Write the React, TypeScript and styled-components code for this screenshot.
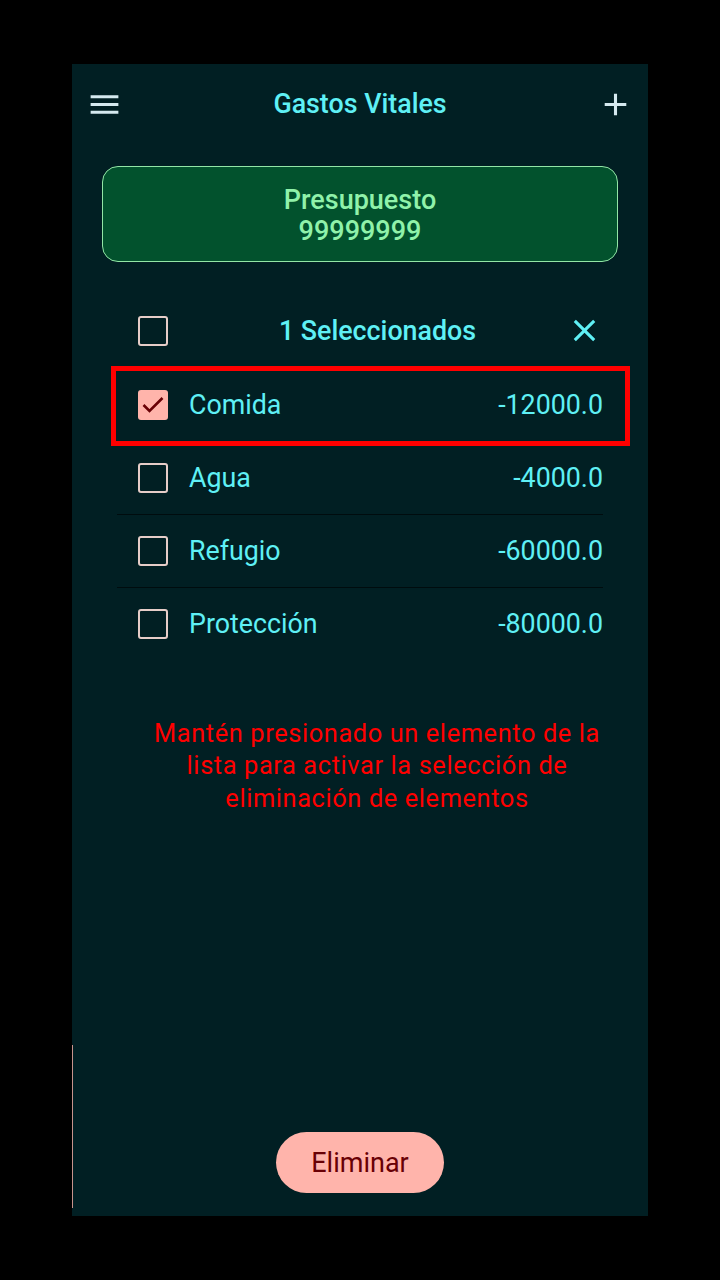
import React from "react";
import styled, { createGlobalStyle } from "styled-components";

const GlobalStyle = createGlobalStyle`
  html, body {
    margin: 0;
    padding: 0;
    background: #000000;
  }
  body {
    font-family: Roboto, "Noto Sans", sans-serif;
  }
`;

const Page = styled.div`
  width: 720px;
  height: 1280px;
  padding: 64px 72px;
  box-sizing: border-box;
  background: #000000;
`;

const Screen = styled.div`
  position: relative;
  width: 576px;
  height: 1152px;
  background: #011f23;
  display: flex;
  flex-direction: column;
`;

const EdgeLine = styled.div`
  position: absolute;
  left: 0;
  top: 981px;
  width: 1px;
  height: 163px;
  background: #c7938d;
`;

const TopBar = styled.div`
  height: 80px;
  display: grid;
  grid-template-columns: auto 1fr auto;
  align-items: center;
  padding: 0 14px;
`;

const IconButton = styled.div<{ $color?: string }>`
  width: 37px;
  height: 37px;
  display: flex;
  align-items: center;
  justify-content: center;
  color: ${(p) => p.$color ?? "#d5e9ef"};
  svg {
    width: 37px;
    height: 37px;
    fill: currentColor;
  }
`;

const Title = styled.div`
  text-align: center;
  font-size: 26.8px;
  font-weight: 500;
  color: #5ff0f5;
`;

const BudgetCard = styled.div`
  margin: 22px 30px 0;
  height: 96px;
  box-sizing: border-box;
  padding-top: 3px;
  border: 1.5px solid #92e6a6;
  border-radius: 16px;
  background: #02522d;
  display: flex;
  flex-direction: column;
  align-items: center;
  justify-content: center;
  color: #90f2aa;
  font-size: 27px;
  font-weight: 500;
  line-height: 31px;
`;

const List = styled.div`
  margin: 31px 45px 0;
  display: flex;
  flex-direction: column;
`;

const SelectHeader = styled.div`
  height: 75.5px;
  display: grid;
  grid-template-columns: auto 1fr auto;
  align-items: center;
  padding-left: 21px;
`;

const HeaderTitle = styled.div`
  text-align: center;
  padding-left: 21px;
  font-size: 26.8px;
  font-weight: 500;
  color: #5ff0f5;
`;

const Box = styled.div<{ $checked?: boolean }>`
  width: 30px;
  height: 30px;
  box-sizing: border-box;
  border-radius: 3px;
  border: ${(p) => (p.$checked ? "none" : "2.5px solid #e6cdc8")};
  background: ${(p) => (p.$checked ? "#ffb4ab" : "transparent")};
  display: flex;
  align-items: center;
  justify-content: center;
  flex-shrink: 0;
  svg {
    width: 30px;
    height: 30px;
  }
`;

const Row = styled.div`
  position: relative;
  height: 72px;
  display: flex;
  align-items: center;
  padding-left: 21px;
  & + & {
    border-top: 1.5px solid #000c0e;
  }
`;

const Label = styled.div`
  margin-left: 21px;
  font-size: 26.8px;
  color: #5ff0f5;
`;

const Amount = styled.div`
  margin-left: auto;
  font-size: 26.8px;
  color: #5ff0f5;
`;

const Highlight = styled.div`
  position: absolute;
  z-index: 2;
  top: -3px;
  left: -6px;
  right: -27px;
  bottom: -5px;
  border: 5px solid #ff0000;
  pointer-events: none;
`;

const Hint = styled.div`
  margin-top: 57px;
  padding: 0 30px 0 64px;
  text-align: center;
  font-family: Roboto, sans-serif;
  font-size: 25.4px;
  letter-spacing: 0.6px;
  line-height: 32.5px;
  color: #ff0000;
  white-space: nowrap;
`;

const DeleteButton = styled.div`
  margin: auto auto 23px;
  width: 168px;
  height: 61px;
  border-radius: 31px;
  background: #ffb4ab;
  color: #690005;
  font-size: 27px;
  display: flex;
  align-items: center;
  justify-content: center;
`;

const MenuIcon = () => (
  <svg viewBox="0 0 24 24">
    <path d="M3 18h18v-2H3v2zm0-5h18v-2H3v2zm0-7v2h18V6H3z" />
  </svg>
);

const AddIcon = () => (
  <svg viewBox="0 0 24 24">
    <path d="M19 13h-6v6h-2v-6H5v-2h6V5h2v6h6v2z" />
  </svg>
);

const CloseIcon = () => (
  <svg viewBox="0 0 24 24">
    <path d="M19 6.41L17.59 5 12 10.59 6.41 5 5 6.41 10.59 12 5 17.59 6.41 19 12 13.41 17.59 19 19 17.59 13.41 12z" />
  </svg>
);

const CheckMark = () => (
  <svg viewBox="0 0 30 30">
    <polyline
      points="5.5,15 11.5,21 24.5,8"
      fill="none"
      stroke="#690005"
      strokeWidth="2.6"
    />
  </svg>
);

const items = [
  { name: "Comida", amount: "-12000.0", checked: true },
  { name: "Agua", amount: "-4000.0", checked: false },
  { name: "Refugio", amount: "-60000.0", checked: false },
  { name: "Protección", amount: "-80000.0", checked: false },
];

export default function App() {
  return (
    <>
      <GlobalStyle />
      <Page>
        <Screen>
          <EdgeLine />
          <TopBar>
            <IconButton>
              <MenuIcon />
            </IconButton>
            <Title>Gastos Vitales</Title>
            <IconButton>
              <AddIcon />
            </IconButton>
          </TopBar>
          <BudgetCard>
            <div>Presupuesto</div>
            <div>99999999</div>
          </BudgetCard>
          <List>
            <SelectHeader>
              <Box />
              <HeaderTitle>1 Seleccionados</HeaderTitle>
              <IconButton $color="#5ff0f5">
                <CloseIcon />
              </IconButton>
            </SelectHeader>
            {items.map((it) => (
              <Row key={it.name}>
                <Box $checked={it.checked}>{it.checked && <CheckMark />}</Box>
                <Label>{it.name}</Label>
                <Amount>{it.amount}</Amount>
                {it.checked && <Highlight />}
              </Row>
            ))}
          </List>
          <Hint>
            Mantén presionado un elemento de la
            <br />
            lista para activar la selección de
            <br />
            eliminación de elementos
          </Hint>
          <DeleteButton>Eliminar</DeleteButton>
        </Screen>
      </Page>
    </>
  );
}
